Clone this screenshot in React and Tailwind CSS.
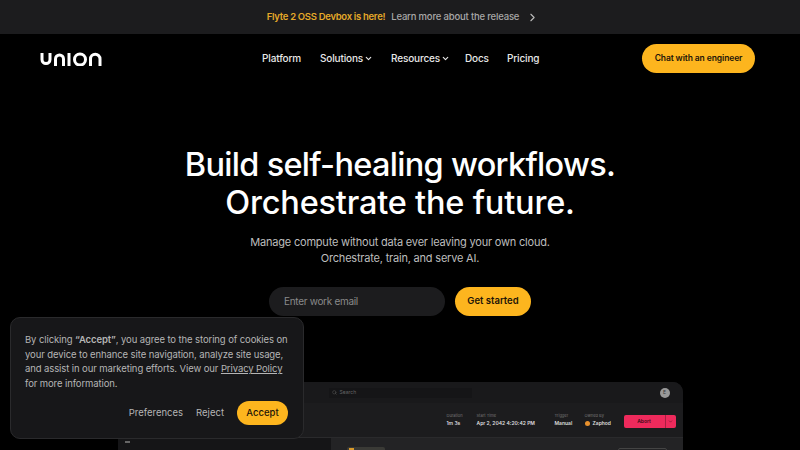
import React from "react";
import { ChevronDown, ChevronRight, Search } from "lucide-react";

const font = "font-['Inter','Noto_Sans',sans-serif]";

const NavLink = ({ label, caret, className = "" }) => (
  <span className={`flex items-center gap-[1px] text-[10px] font-medium tracking-[-0.15px] text-[#e8e8e8] ${className}`}>
    {label}
    {caret && <ChevronDown size={9} strokeWidth={3} />}
  </span>
);

const Logo = () => (
  <svg width="62" height="14" viewBox="0 0 62 14" fill="none" stroke="white" strokeWidth="3">
    <path d="M2 1v6.5a4 4 0 0 0 8 0V1" />
    <path d="M15.5 14V7a4 4 0 0 1 8 0v7" />
    <path d="M29 1v13" />
    <circle cx="40" cy="7.5" r="5.5" />
    <path d="M50.5 14V7a4.5 4.5 0 0 1 9.5 0v7" />
  </svg>
);

const Meta = ({ label, value, dot, className = "" }) => (
  <div className={`flex flex-col gap-[1px] ${className}`}>
    <span className="text-[4px] leading-[6px] text-[#777]">{label}</span>
    <span className="flex items-center gap-[3px] text-[5px] leading-[7px] font-semibold text-[#ddd]">
      {dot && <span className="h-[5px] w-[5px] rounded-full bg-[#e8912d]" />}
      {value}
    </span>
  </div>
);

const Preview = () => (
  <div className="mx-auto mt-[66px] h-[68px] w-[565px] overflow-hidden rounded-t-[10px] bg-[#1c1c1e]">
    <div className="flex h-[21px] items-center justify-between bg-[#19191b] pr-[13px] pl-[211px]">
      <div className="flex h-[10px] w-[143px] items-center gap-[3px] bg-[#151517] pl-[3px] text-[5px] text-[#666]">
        <Search size={5} />
        Search
      </div>
      <span className="flex h-[10px] w-[10px] items-center justify-center rounded-full bg-[#999] text-[5px] text-[#333]">
        E
      </span>
    </div>
    <div className="flex h-[35px] items-center justify-end border-b border-[#2a2a2c] pr-[7px]">
      <Meta label="Duration" value="1m 3s" className="w-[30px]" />
      <Meta label="Start Time" value="Apr 2, 2042 4:20:42 PM" className="w-[78px]" />
      <Meta label="Trigger" value="Manual" className="w-[30px]" />
      <Meta label="Owned By" value="Zaphod" dot className="w-[39px]" />
      <div className="mt-[3px] flex h-[13px] w-[52px] items-center rounded-[2px] bg-[#ee2a5c] text-[5px] font-semibold text-[#3a0a16]">
        <span className="flex-1 text-center">Abort</span>
        <span className="flex h-full w-[11px] items-center justify-center border-l border-[#a81f42]">
          <ChevronDown size={5} />
        </span>
      </div>
    </div>
    <div className="flex h-[12px]">
      <div className="w-[213px] bg-[#151517] pt-[3px] pl-[7px]">
        <span className="block h-[2px] w-[5px] bg-[#666]" />
      </div>
      <div className="flex flex-1 bg-[#232325] pt-[9px] pl-[16px]">
        <span className="h-[8px] w-[38px] rounded-[2px] bg-[#3a3a36] pt-[1px] pl-[2px]">
          <span className="block h-[3px] w-[5px] bg-[#d99a2b]" />
        </span>
        <span className="mt-[1px] mr-[16px] ml-auto h-[8px] w-[49px] rounded-[2px] border border-[#444]" />
      </div>
    </div>
  </div>
);

export default function App() {
  return (
    <div className={`relative h-[450px] w-[800px] overflow-hidden bg-black ${font}`}>
      {/* announcement */}
      <div className="flex h-[34px] items-center justify-center gap-[6px] bg-[#1c1c1e] pl-[6px] text-[9.5px] font-medium">
        <span className="font-semibold tracking-[-0.3px] text-[#e5a929]">Flyte 2 OSS Devbox is here!</span>
        <span className="tracking-[-0.18px] text-[#a8a8a8]">Learn more about the release</span>
        <ChevronRight size={13} className="ml-[1px] text-[#bbb]" />
      </div>

      <nav className="flex h-[49px] items-center pr-[45px] pl-[40px]">
        <Logo />
        <div className="ml-[160px] flex items-center">
          <NavLink label="Platform" className="w-[58px]" />
          <NavLink label="Solutions" caret className="w-[71px]" />
          <NavLink label="Resources" caret className="w-[74px]" />
          <NavLink label="Docs" className="w-[42px]" />
          <NavLink label="Pricing" />
        </div>
        <button className="ml-auto h-[29px] w-[113px] rounded-full bg-[#fdb51e] text-[8.5px] font-semibold tracking-[-0.1px] text-[#1c1408]">
          Chat with an engineer
        </button>
      </nav>

      <main className="flex flex-col items-center pt-[63px] text-center">
        <h1 className="text-[32.5px] leading-[37.5px] font-medium tracking-[-0.7px] text-white">
          Build self-healing workflows.
          <br />
          <span className="tracking-[-0.2px]">Orchestrate the future.</span>
        </h1>
        <p className="mt-[13px] text-[11px] leading-[16px] tracking-[-0.2px] text-[#bdbdbd]">
          Manage compute without data ever leaving your own cloud.
          <br />
          Orchestrate, train, and serve AI.
        </p>
        <div className="mt-[21px] flex gap-[10px]">
          <div className="flex h-[29px] w-[176px] items-center rounded-full bg-[#1c1c1e] pl-[15px] text-left text-[10px] tracking-[-0.3px] text-[#8a8a8a]">
            Enter work email
          </div>
          <button className="h-[29px] w-[76px] rounded-full bg-[#fdb51e] text-[9.5px] font-semibold text-[#1c1408]">
            Get started
          </button>
        </div>
      </main>

      <Preview />

      {/* cookie banner */}
      <div className="absolute top-[317px] left-[10px] w-[294px] rounded-[10px] border border-[#2a2a2c] bg-[#171719] pt-[15px] pr-[15px] pb-[13px] pl-[14px]">
        <p className="text-[9.5px] leading-[14.6px] tracking-[-0.1px] whitespace-nowrap text-[#b5b5b5]">
          By clicking <span className="font-semibold">“Accept”</span>, you agree to the storing of cookies on
          <br />
          your device to enhance site navigation, analyze site usage,
          <br />
          and assist in our marketing efforts. View our <span className="underline">Privacy Policy</span>
          <br />
          for more information.
        </p>
        <div className="mt-[10px] flex items-center justify-end gap-[13px] text-[9.5px] text-[#b5b5b5]">
          <span>Preferences</span>
          <span>Reject</span>
          <button className="h-[24px] w-[51px] rounded-full bg-[#fdb51e] font-medium text-[#1c1408]">
            Accept
          </button>
        </div>
      </div>
    </div>
  );
}
